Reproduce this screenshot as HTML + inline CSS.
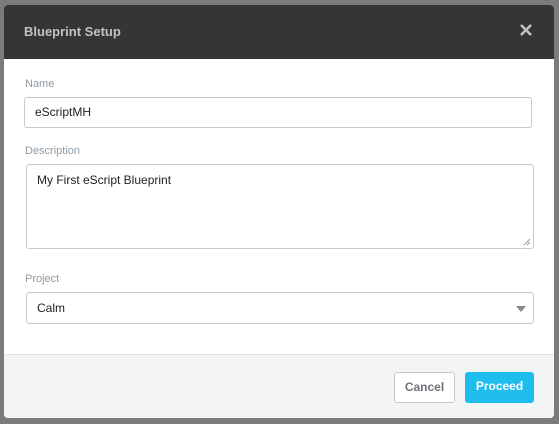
<!DOCTYPE html><html><head><style>
body{margin:0;width:559px;height:424px;background:#7b7b7b;font-family:"Liberation Sans",sans-serif;position:relative;overflow:hidden}
.d{position:absolute;left:4px;top:5px;width:550px;height:413px;background:#fff;border-radius:4px;overflow:hidden}
.h{position:absolute;left:0;top:0;width:550px;height:54px;background:#343536}
.h span{position:absolute;left:20px;top:19px;font-size:13px;font-weight:bold;color:#c0c2c4}
.x{position:absolute;left:515px;top:18px}
.l{position:absolute;font-size:11px;color:#8d9aa5}
.i{position:absolute;border:1px solid #c8c8c8;border-radius:3px;box-sizing:border-box;font-size:12px;color:#222;padding-left:10px}
.f{position:absolute;left:0;top:349px;width:550px;height:64px;background:#f3f4f4;border-top:1px solid #e2e4e5}
.b{position:absolute;top:17px;height:31px;border-radius:3px;box-sizing:border-box;font-size:12px;font-weight:bold;text-align:center;line-height:29px}
</style></head><body><div class="d">
<div class="h"><span>Blueprint Setup</span><svg class="x" width="14" height="14" viewBox="0 0 14 14"><path d="M2 2L12 12M12 2L2 12" stroke="#c0c2c4" stroke-width="2.6"/></svg></div>
<div class="l" style="left:21px;top:73px">Name</div>
<div class="i" style="left:20px;top:92px;width:508px;height:31px;line-height:29px">eScriptMH</div>
<div class="l" style="left:21px;top:140px">Description</div>
<div class="i" style="left:22px;top:159px;width:508px;height:85px;padding-top:8px">My First eScript Blueprint<svg style="position:absolute;right:2px;bottom:2px" width="8" height="8"><path d="M1 7L7 1M4 7L7 4" stroke="#999" stroke-width="1"/></svg></div>
<div class="l" style="left:21px;top:268px">Project</div>
<div class="i" style="left:22px;top:287px;width:508px;height:32px;line-height:30px">Calm<svg style="position:absolute;right:7px;top:13px" width="10" height="6"><path d="M0 0H10L5 6Z" fill="#888"/></svg></div>
<div class="f"><div class="b" style="left:390px;width:61px;border:1px solid #c8c8c8;background:#fff;color:#6e7378">Cancel</div>
<div class="b" style="left:461px;width:69px;background:#1ebdec;color:#fff">Proceed</div></div>
</div></body></html>
